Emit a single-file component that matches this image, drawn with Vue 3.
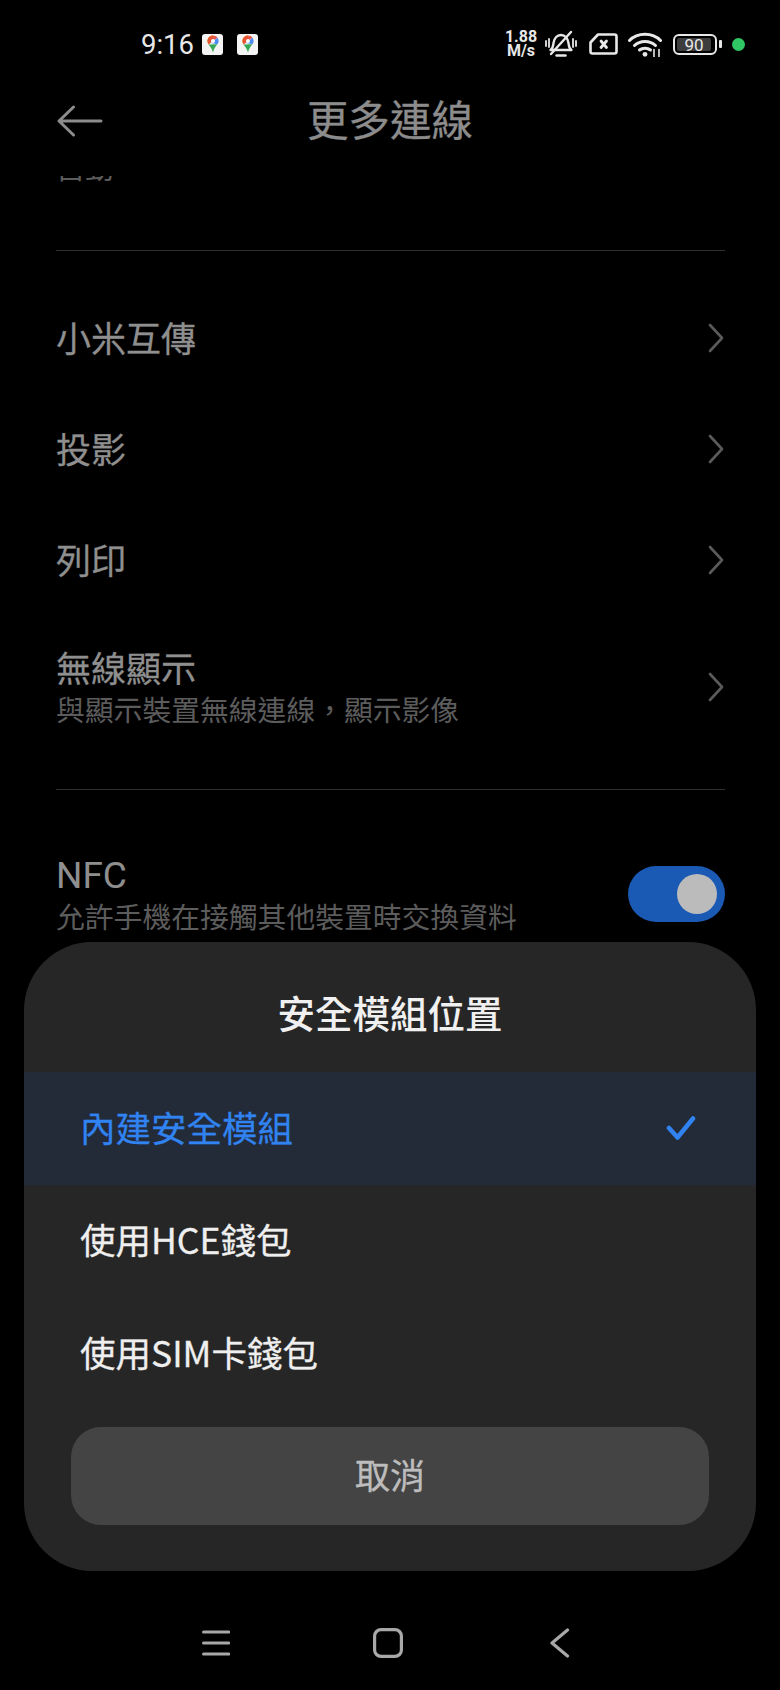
<template>
  <div class="page">
    <div class="status">
      <div class="status-left">
        <span class="time">9:16</span>
        <span v-for="n in 2" :key="n" class="app-badge">
          <svg viewBox="0 0 20 20" width="20" height="20">
            <path d="M10 1.5c-3.3 0-5.6 2.5-5.6 5.5 0 1.3.5 2.4 1.2 3.4L10 4.2z" fill="#f2b600" />
            <path d="M10 1.5c1.9 0 3.5.9 4.5 2.2L5.6 10.4C4.9 9.4 4.4 8.3 4.4 7c0-3 2.3-5.5 5.6-5.5z" fill="#e5493a" opacity=".9" />
            <path d="M14.5 3.7c.7.9 1.1 2.1 1.1 3.3 0 1.3-.5 2.3-1.2 3.3L8.2 9z" fill="#4c8bf5" />
            <path d="M5.6 10.4l8.8-.1c-1.5 2.2-3.5 4-4.4 8.2-.7-3.6-2.9-5.8-4.4-8.1z" fill="#34a853" />
            <circle cx="10" cy="7" r="2" fill="#fff" />
          </svg>
        </span>
      </div>
      <div class="status-right">
        <div class="speed"><span>1.88</span><span>M/s</span></div>
        <svg class="ic-bell" viewBox="0 0 32 28" width="32" height="28" fill="none" stroke="#e8e8e8" stroke-width="2.4" stroke-linecap="round" stroke-linejoin="round">
          <path d="M5.5 20c2.500-1.500 2.500-3.500 3-7 .6-4.500 3.500-8 7.500-8s6.900 3.500 7.500 8c.5 3.500.5 5.500 3 7z" />
          <path d="M11.500 25.500h9" />
          <path d="M6 24 26 2" />
          <path d="M1 11v5M4 9v8M28 9v8M31 11v5" stroke-width="1.800" />
        </svg>
        <svg class="ic-sim" viewBox="0 0 29 22" width="29" height="22" fill="none" stroke="#e8e8e8" stroke-width="2.600" stroke-linejoin="round" stroke-linecap="round">
          <path d="M9 1.500h16.500a2 2 0 0 1 2 2v15a2 2 0 0 1-2 2h-22a2 2 0 0 1-2-2V9.500z" />
          <path d="M12 8l5.500 6.500M17.500 8 12 14.500" stroke-width="2.800" />
        </svg>
        <svg class="ic-wifi" viewBox="0 0 34 25" width="34" height="25" fill="none" stroke="#e8e8e8" stroke-width="3" stroke-linecap="round">
          <path d="M1.500 8.500C9.500 .2 24.500 .2 32.500 8.500" />
          <path d="M6.500 13.500c5.500-5.500 15.500-5.500 21 0" />
          <path d="M11.500 18c3-2.500 8-2.500 11 0" />
          <circle cx="17" cy="22.300" r="2.400" fill="#e8e8e8" stroke="none" />
          <path d="M26 17.500v7M31 17.500v7" stroke-width="1.600" />
        </svg>
        <div class="battery">
          <div class="battery-body"><span class="battery-level">90</span></div>
          <i class="battery-cap"></i>
        </div>
        <i class="green-dot"></i>
      </div>
    </div>

    <div class="header">
      <svg class="back" viewBox="0 0 46 32" width="46" height="32" fill="none" stroke="#8c8c8c" stroke-width="3" stroke-linecap="round" stroke-linejoin="round">
        <path d="M16.500 2 2 16l14.500 14M2 16h42" />
      </svg>
      <h1 class="title">更多連線</h1>
    </div>

    <div class="list">
      <div class="scrolled-off">自動</div>
      <div class="divider first"></div>
      <div v-for="row in rows" :key="row.title" class="row" :class="{ tall: row.sub }">
        <div class="row-text">
          <div class="row-title">{{ row.title }}</div>
          <div v-if="row.sub" class="row-sub">{{ row.sub }}</div>
        </div>
        <svg class="chev" viewBox="0 0 16 30" width="16" height="30" fill="none" stroke="#5a5a5a" stroke-width="2.600" stroke-linecap="round" stroke-linejoin="round">
          <path d="M2 2l12 13L2 28" />
        </svg>
      </div>
      <div class="divider second"></div>
      <div class="row nfc">
        <div class="row-text">
          <div class="row-title latin">NFC</div>
          <div class="row-sub">允許手機在接觸其他裝置時交換資料</div>
        </div>
        <div class="toggle"><i class="knob"></i></div>
      </div>
    </div>

    <div class="sheet">
      <div class="sheet-title">安全模組位置</div>
      <div v-for="opt in options" :key="opt.label" class="option" :class="{ active: opt.active }">
        <span class="option-label">{{ opt.label }}</span>
        <svg v-if="opt.active" viewBox="0 0 30 26" width="30" height="26" fill="none" stroke="#3083f0" stroke-width="4.500" stroke-linecap="round" stroke-linejoin="round">
          <path d="M3 13l8.500 9.500L27 3.500" />
        </svg>
      </div>
      <div class="cancel">取消</div>
    </div>

    <div class="navbar">
      <svg viewBox="0 0 28 26" width="28" height="26" fill="none" stroke="#a8a8a8" stroke-width="3.200" stroke-linecap="round">
        <path d="M1.600 2h25M1.600 13h25M1.600 24h25" />
      </svg>
      <svg class="nav-home" viewBox="0 0 30 30" width="30" height="30" fill="none" stroke="#a8a8a8" stroke-width="3.200">
        <rect x="1.600" y="1.600" width="26.800" height="26.800" rx="6.500" />
      </svg>
      <svg class="nav-back" viewBox="0 0 20 30" width="20" height="30" fill="none" stroke="#a8a8a8" stroke-width="3.200" stroke-linecap="round" stroke-linejoin="round">
        <path d="M17.500 2 2 15l15.500 13" />
      </svg>
    </div>
  </div>
</template>

<script setup>
const rows = [
  { title: '小米互傳' },
  { title: '投影' },
  { title: '列印' },
  { title: '無線顯示', sub: '與顯示裝置無線連線，顯示影像' },
];

const options = [
  { label: '內建安全模組', active: true },
  { label: '使用HCE錢包' },
  { label: '使用SIM卡錢包' },
];
</script>

<style>
body {
  margin: 0;
  background: #000;
}
</style>

<style scoped>
.page {
  position: relative;
  width: 780px;
  height: 1690px;
  background: #000;
  overflow: hidden;
  display: flex;
  flex-direction: column;
  font-family: "Noto Sans CJK TC", "Noto Sans", sans-serif;
}

.status {
  flex: none;
  height: 88px;
  display: flex;
  align-items: center;
  justify-content: space-between;
  padding: 0 35px 0 141px;
  color: #e8e8e8;
}
.status-left {
  display: flex;
  align-items: center;
  gap: 14px;
}
.time {
  font: 400 27.5px Roboto, sans-serif;
  width: 51px;
  margin-right: -4px;
}
.app-badge {
  width: 21px;
  height: 21px;
  background: #f4f4f4;
  border-radius: 3px;
  display: flex;
  align-items: center;
  justify-content: center;
}
.status-right {
  display: flex;
  align-items: center;
}
.speed {
  display: flex;
  flex-direction: column;
  align-items: center;
  font: 700 16px/14px Roboto, sans-serif;
  width: 32px;
  margin-right: 8px;
}
.ic-bell {
  margin-right: 12px;
}
.ic-sim {
  margin-right: 10px;
}
.ic-wifi {
  margin-right: 11px;
}
.battery {
  display: flex;
  align-items: center;
  gap: 2px;
  margin-right: 10px;
}
.battery-body {
  width: 44px;
  height: 21px;
  border: 2px solid #e8e8e8;
  border-radius: 6px;
  padding: 2px;
  box-sizing: border-box;
}
.battery-level {
  display: block;
  width: 34px;
  height: 13px;
  background: #3d3d3d;
  border-radius: 2px;
  font: 400 17px/14px Roboto, sans-serif;
  text-align: center;
  color: #e8e8e8;
}
.battery-cap {
  width: 3px;
  height: 8px;
  border-radius: 1px;
  background: #e8e8e8;
}
.green-dot {
  width: 13px;
  height: 13px;
  border-radius: 50%;
  background: #2fc864;
}

.header {
  flex: none;
  height: 88px;
  position: relative;
  display: flex;
  align-items: center;
  justify-content: center;
}
.back {
  position: absolute;
  left: 57px;
  top: 17px;
}
.title {
  margin: 0;
  font-size: 41.5px;
  font-weight: 400;
  -webkit-text-stroke: 0.3px #8c8c8c;
  color: #8c8c8c;
  line-height: 62px;
  padding-bottom: 28px;
}

.list {
  flex: 1;
  overflow: hidden;
  padding: 0 55px 0 56px;
}
.scrolled-off {
  font-size: 29px;
  line-height: 40px;
  color: #5c5c5c;
  margin-top: -30px;
}
.divider {
  height: 1px;
  background: #2e2e2e;
}
.divider.first {
  margin-top: 64px;
  margin-bottom: 31px;
}
.divider.second {
  margin-top: 31px;
  margin-bottom: 56px;
}
.row {
  height: 111px;
  display: flex;
  align-items: center;
  justify-content: space-between;
}
.row-text {
  padding-bottom: 2px;
}
.row.tall {
  height: 143px;
}
.row.tall .row-text,
.row.nfc .row-text {
  padding-bottom: 0;
}
.row-title {
  font-size: 35px;
  font-weight: 400;
  -webkit-text-stroke: 0.3px #8f8f8f;
  line-height: 44px;
  color: #8f8f8f;
}
.row-title.latin {
  font-family: Roboto, sans-serif;
  font-size: 37px;
  -webkit-text-stroke: 0;
  letter-spacing: 0;
  position: relative;
  top: 2px;
}
.row-sub {
  font-size: 28.8px;
  line-height: 40px;
  color: #5c5c5c;
}
.chev {
  margin-right: 1px;
}
.nfc {
  height: 96px;
}
.toggle {
  width: 97px;
  height: 56px;
  border-radius: 28px;
  background: #1b5ab4;
  display: flex;
  align-items: center;
  justify-content: flex-end;
  padding-right: 8px;
  box-sizing: border-box;
}
.knob {
  width: 40px;
  height: 40px;
  border-radius: 50%;
  background: #bbb;
}

.sheet {
  position: absolute;
  left: 24px;
  top: 942px;
  width: 732px;
  height: 629px;
  background: #262626;
  border-radius: 68px;
  overflow: hidden;
  display: flex;
  flex-direction: column;
}
.sheet-title {
  height: 130px;
  line-height: 139px;
  text-align: center;
  font-size: 37.5px;
  font-weight: 500;
  color: #f0f0f0;
}
.option {
  flex: none;
  height: 112.500px;
  display: flex;
  align-items: center;
  justify-content: space-between;
  padding: 0 60px 0 56px;
  font-size: 35.5px;
  color: #efefef;
}
.option-label {
  padding-bottom: 4px;
  -webkit-text-stroke: 0.3px currentColor;
}
.option.active {
  background: #232b38;
  color: #3083f0;
}
.cancel {
  margin: 17px 47px 0;
  height: 98px;
  border-radius: 30px;
  background: #444;
  text-align: center;
  line-height: 93px;
  font-size: 35px;
  -webkit-text-stroke: 0.3px #bdbdbd;
  color: #bdbdbd;
}

.navbar {
  position: absolute;
  left: 202px;
  bottom: 32px;
  display: flex;
  align-items: center;
}
.nav-home {
  margin-left: 143px;
}
.nav-back {
  margin-left: 147px;
}
</style>
